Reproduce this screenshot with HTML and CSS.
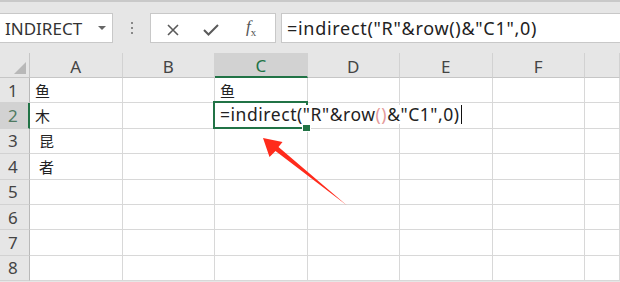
FILE: index.html
```html
<!DOCTYPE html>
<html lang="zh-CN">
<head>
    <meta charset="UTF-8">
    <meta name="viewport" content="width=device-width, initial-scale=1.0">
    <title>INDIRECT - 表格</title>
    <link rel="stylesheet" href="styles.css">
</head>
<body>
    <div class="app">
        <div class="toolbar">
            <div class="namebox">
                <span>INDIRECT</span>
                <span class="caret"></span>
            </div>
            <div class="grip"><i></i><i></i><i></i></div>
            <div class="fxbox">
                <svg class="icon" width="12" height="12" viewBox="0 0 12 12">
                    <path d="M1 1 L11 11 M11 1 L1 11" stroke="#5a5a5a" stroke-width="1.6" fill="none"/>
                </svg>
                <svg class="icon" width="16" height="12" viewBox="0 0 16 12">
                    <path d="M1 6 L5.5 10.5 L15 1" stroke="#5a5a5a" stroke-width="2" fill="none"/>
                </svg>
                <span class="fx"><i>f</i><sub>x</sub></span>
            </div>
            <div class="formula">=indirect("R"&amp;row()&amp;"C1",0)</div>
        </div>

        <div class="sheet">
            <div class="corner"><span class="tri"></span></div>
            <div class="colhead">A</div>
            <div class="colhead">B</div>
            <div class="colhead selected">C</div>
            <div class="colhead">D</div>
            <div class="colhead">E</div>
            <div class="colhead">F</div>
            <div class="colhead"></div>

            <div class="rowhead">1</div>
            <div class="cell">鱼</div>
            <div class="cell"></div>
            <div class="cell">鱼</div>
            <div class="cell"></div>
            <div class="cell"></div>
            <div class="cell"></div>
            <div class="cell"></div>

            <div class="rowhead selected">2</div>
            <div class="cell">木</div>
            <div class="cell"></div>
            <div class="cell active">
                <span class="edit">=indirect("R"&amp;row<span class="paren">()</span>&amp;"C1",0)</span>
            </div>
            <div class="cell"></div>
            <div class="cell"></div>
            <div class="cell"></div>
            <div class="cell"></div>

            <div class="rowhead">3</div>
            <div class="cell indent">昆</div>
            <div class="cell"></div>
            <div class="cell"></div>
            <div class="cell"></div>
            <div class="cell"></div>
            <div class="cell"></div>
            <div class="cell"></div>

            <div class="rowhead">4</div>
            <div class="cell indent">者</div>
            <div class="cell"></div>
            <div class="cell"></div>
            <div class="cell"></div>
            <div class="cell"></div>
            <div class="cell"></div>
            <div class="cell"></div>

            <div class="rowhead">5</div>
            <div class="cell"></div>
            <div class="cell"></div>
            <div class="cell"></div>
            <div class="cell"></div>
            <div class="cell"></div>
            <div class="cell"></div>
            <div class="cell"></div>

            <div class="rowhead">6</div>
            <div class="cell"></div>
            <div class="cell"></div>
            <div class="cell"></div>
            <div class="cell"></div>
            <div class="cell"></div>
            <div class="cell"></div>
            <div class="cell"></div>

            <div class="rowhead">7</div>
            <div class="cell"></div>
            <div class="cell"></div>
            <div class="cell"></div>
            <div class="cell"></div>
            <div class="cell"></div>
            <div class="cell"></div>
            <div class="cell"></div>

            <div class="rowhead">8</div>
            <div class="cell"></div>
            <div class="cell"></div>
            <div class="cell"></div>
            <div class="cell"></div>
            <div class="cell"></div>
            <div class="cell"></div>
            <div class="cell"></div>
        </div>

        <!-- annotation arrow drawn over the sheet -->
        <svg class="arrow" width="620" height="282" viewBox="0 0 620 282">
            <polygon points="263,138 282.5,142 278.5,147 347,205.5 275.5,151 269.5,157" fill="#ff2b1c"/>
        </svg>
    </div>
</body>
</html>
```

FILE: styles.css
```css
* {
    margin: 0;
    padding: 0;
    box-sizing: border-box;
}

body {
    background-color: #e6e6e6;
    font-family: "Noto Sans", "Noto Sans CJK SC", sans-serif;
    color: #222;
}

.app {
    position: relative;
    width: 620px;
    height: 282px;
    overflow: hidden;
}

/* formula bar */
.toolbar {
    display: flex;
    align-items: center;
    height: 53px;
    padding-top: 11px;
    padding-bottom: 10px;
    border-top: 2px solid #c9c9c9;
}

.namebox {
    display: flex;
    align-items: center;
    justify-content: space-between;
    width: 113px;
    height: 30px;
    background: white;
    border: 1px solid #c8c8c8;
    border-left: none;
    padding: 0 5px 0 5px;
    font-size: 17px;
    color: #333;
}

.caret {
    width: 0;
    height: 0;
    border-left: 4px solid transparent;
    border-right: 4px solid transparent;
    border-top: 4px solid #666;
    margin-right: 1px;
}

.grip {
    display: flex;
    flex-direction: column;
    align-items: center;
    gap: 3px;
    width: 37px;
}

.grip i {
    width: 2px;
    height: 2px;
    background: #888;
}

.fxbox {
    display: flex;
    align-items: center;
    width: 126px;
    height: 30px;
    background: white;
    border: 1px solid #c8c8c8;
    padding-left: 16px;
    gap: 24px;
}

.icon {
    display: block;
    margin-top: 3px;
}

.fx {
    font-family: "Liberation Serif", serif;
    font-size: 17px;
    color: #555;
    margin-left: 3px;
}

.fx sub {
    font-size: 11px;
}

.formula {
    flex: 1;
    height: 30px;
    margin-left: 5px;
    background: white;
    border: 1px solid #c8c8c8;
    border-right: none;
    padding-left: 5px;
    font-size: 18px;
    letter-spacing: 0.7px;
    line-height: 28px;
    white-space: nowrap;
    color: #222;
}

/* sheet grid */
.sheet {
    display: grid;
    grid-template-columns: 30px repeat(6, 92.5px) 1fr;
    grid-template-rows: 25px repeat(8, 25.4px);
    background: white;
}

.corner,
.colhead,
.rowhead {
    background: #e6e6e6;
    color: #444;
    font-size: 17px;
    display: flex;
    align-items: center;
    justify-content: center;
}

.corner {
    position: relative;
    border-right: 1px solid #c6c6c6;
    border-bottom: 1px solid #c6c6c6;
}

.tri {
    position: absolute;
    right: 3px;
    bottom: 3px;
    width: 0;
    height: 0;
    border-left: 12px solid transparent;
    border-bottom: 12px solid #b8b8b8;
}

.colhead {
    border-right: 1px solid #d2d2d2;
    border-bottom: 1px solid #c6c6c6;
    padding-top: 2px;
}

.colhead.selected {
    background: #d2d2d2;
    color: #217346;
    border-bottom: 2px solid #217346;
}

.rowhead {
    border-right: 1px solid #b9b9b9;
    border-bottom: 1px solid #d2d2d2;
    justify-content: flex-start;
    padding-left: 8px;
}

.rowhead.selected {
    background: #d2d2d2;
    color: #4f7a62;
    border-right: 2px solid #217346;
}

.cell {
    border-right: 1px solid #d8d8d8;
    border-bottom: 1px solid #d8d8d8;
    font-size: 15px;
    padding-left: 5px;
    display: flex;
    align-items: center;
    white-space: nowrap;
    font-family: "Noto Sans CJK SC", sans-serif;
}

.cell.indent {
    padding-left: 9px;
}

.cell.active {
    position: relative;
    z-index: 1;
    overflow: visible;
    align-items: flex-start;
}

/* selection frame, sits under the overflowing text */
.cell.active::before {
    content: "";
    position: absolute;
    left: -2px;
    top: -2px;
    right: -1px;
    bottom: -1px;
    border: 2px solid #217346;
}

.cell.active::after {
    content: "";
    position: absolute;
    right: -4px;
    bottom: -4px;
    width: 7px;
    height: 6px;
    background: #217346;
    border: 1px solid white;
    z-index: 2;
}

.edit {
    position: relative;
    z-index: 1;
    font-family: "Noto Sans", sans-serif;
    font-size: 17.5px;
    letter-spacing: 0.55px;
    background: white;
    color: #222;
    padding-right: 1px;
    border-right: 1px solid #111;
    line-height: 19px;
    margin-top: 2px;
}

.paren {
    color: #e59a9a;
}

.arrow {
    position: absolute;
    left: 0;
    top: 0;
    pointer-events: none;
}
```
